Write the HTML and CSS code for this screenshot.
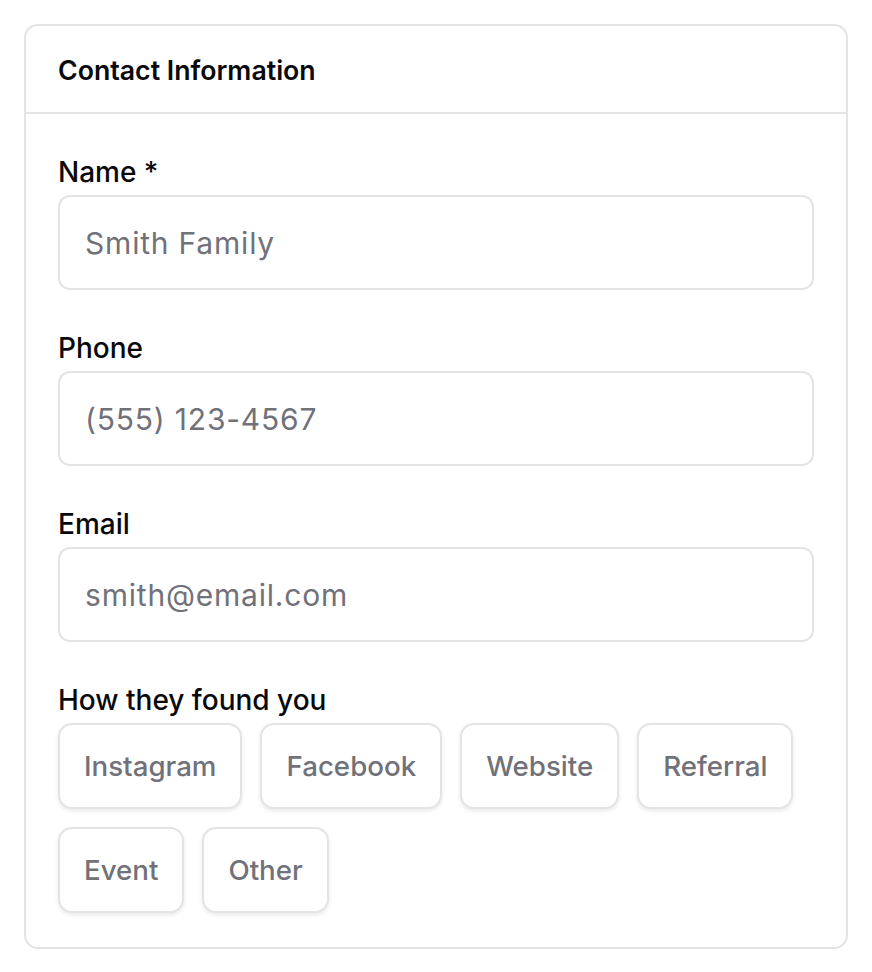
FILE: index.html
```html
<!DOCTYPE html>
<html lang="en">
<head>
  <meta charset="UTF-8">
  <meta name="viewport" content="width=device-width, initial-scale=1.0">
  <title>Contact Information</title>
  <link rel="stylesheet" href="styles.css">
</head>
<body>
  <div class="card">
    <div class="card-header">Contact Information</div>
    <div class="card-body">
      <div class="field">
        <label class="label" for="name">Name *</label>
        <input class="input" id="name" type="text" placeholder="Smith Family">
      </div>
      <div class="field">
        <label class="label" for="phone">Phone</label>
        <input class="input" id="phone" type="tel" placeholder="(555) 123-4567">
      </div>
      <div class="field">
        <label class="label" for="email">Email</label>
        <input class="input" id="email" type="email" placeholder="smith@email.com">
      </div>
      <div class="field">
        <div class="label">How they found you</div>
        <div class="chips">
          <button class="chip" type="button">Instagram</button>
          <button class="chip" type="button">Facebook</button>
          <button class="chip" type="button">Website</button>
          <button class="chip" type="button">Referral</button>
          <button class="chip" type="button">Event</button>
          <button class="chip" type="button">Other</button>
        </div>
      </div>
    </div>
  </div>
</body>
</html>
```

FILE: styles.css
```css
* {
  margin: 0;
  padding: 0;
  box-sizing: border-box;
}

body {
  background-color: #fff;
  padding: 24px;
  font-family: Inter, "Noto Sans", sans-serif;
  color: #09090b;
}

.card {
  border: 2px solid #e4e4e7;
  border-radius: 14px;
  background: #fff;
}

.card-header {
  padding: 26px 32px 24px;
  border-bottom: 2px solid #e4e4e7;
  font-size: 26.7px;
  line-height: 36px;
  font-weight: 600;
}

.card-body {
  padding: 40px 32px 34px;
  display: flex;
  flex-direction: column;
  gap: 40px;
}

.field {
  display: flex;
  flex-direction: column;
  gap: 5px;
}

.label {
  font-size: 28px;
  line-height: 36px;
  font-weight: 500;
}

.input {
  height: 95px;
  padding: 0 25px;
  border: 2px solid #e4e4e7;
  border-radius: 12px;
  font-family: inherit;
  font-size: 30px;
  letter-spacing: 0.8px;
  color: #09090b;
  outline: none;
}

.input::placeholder {
  color: #71717a;
}

.chips {
  display: flex;
  flex-wrap: wrap;
  gap: 18px;
}

.chip {
  padding: 23px 24px;
  border: 2px solid #e4e4e7;
  border-radius: 14px;
  background: #fff;
  box-shadow: 0 2px 4px rgba(0, 0, 0, 0.09);
  font-family: inherit;
  font-size: 27.7px;
  line-height: 36px;
  font-weight: 500;
  color: #71717a;
}
```
